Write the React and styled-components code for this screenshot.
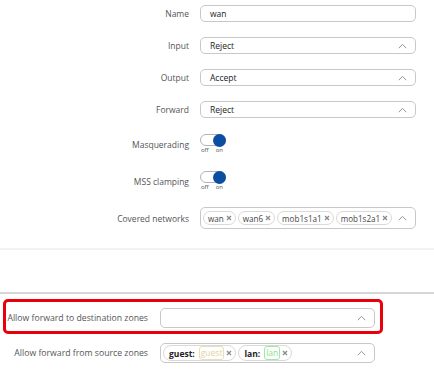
import React from "react";
import styled, { createGlobalStyle } from "styled-components";

const Global = createGlobalStyle`
  html, body { margin: 0; padding: 0; background: #fff; }
  body { font-family: "Open Sans", "DejaVu Sans", sans-serif; width: 434px; overflow: hidden; }
  * { box-sizing: border-box; }
`;

const TopSection = styled.div`
  padding: 5px 0 19px;
  border-bottom: 2px solid #f2f2f2;
  display: flex;
  flex-direction: column;
  gap: 15px;
`;

const FormRow = styled.div`
  display: grid;
  grid-template-columns: 189px 216px;
  column-gap: 11px;
  align-items: center;
`;

const Label = styled.div`
  text-align: right;
  font-size: ${(p) => p.$size || 8.5}px;
  color: #555;
  white-space: nowrap;
`;

const Field = styled.div`
  position: relative;
  height: ${(p) => p.$h || 17}px;
  border: 1px solid #c8c8c8;
  border-radius: 5px;
  background: #fff;
  display: flex;
  align-items: center;
  padding: 0 ${(p) => (p.$chips ? 22 : 9)}px 0 ${(p) => (p.$chips ? 2 : 9)}px;
  gap: 2px;
  font-size: 8.5px;
  color: #222;
`;

const Chevron = styled.svg`
  position: absolute;
  right: 8px;
  top: 50%;
  margin-top: -3px;
`;

const Arrow = () => (
  <Chevron width="9" height="6" viewBox="0 0 9 6">
    <path d="M0.8 5.2 L4.5 1.3 L8.2 5.2" fill="none" stroke="#999" strokeWidth="1" />
  </Chevron>
);

const ToggleGroup = styled.div`
  display: flex;
  flex-direction: column;
  width: 26px;
`;

const Track = styled.div`
  position: relative;
  width: 26px;
  height: 12px;
  margin-top: 1px;
  border: 1px solid #b4b4b4;
  border-radius: 7px;
  background: #fff;
`;

const Knob = styled.div`
  position: absolute;
  right: -1px;
  top: -1.5px;
  width: 13px;
  height: 13px;
  border-radius: 50%;
  background: #0b4ea2;
`;

const OffOn = styled.div`
  display: flex;
  justify-content: space-between;
  padding: 0 3px 0 1px;
  font-size: 6px;
  line-height: 9px;
  color: #555;
`;

const Toggle = () => (
  <ToggleGroup>
    <Track>
      <Knob />
    </Track>
    <OffOn>
      <span>off</span>
      <span>on</span>
    </OffOn>
  </ToggleGroup>
);

const Chip = styled.span`
  display: inline-flex;
  align-items: center;
  height: ${(p) => p.$h || 14}px;
  padding: 0 3px 0 ${(p) => p.$pl || 4}px;
  border: 1px solid #d9d9d9;
  border-radius: 8px;
  font-size: ${(p) => p.$fs || 8.1}px;
  color: #444;
  white-space: nowrap;
  gap: 2px;
`;

const XIcon = () => (
  <svg width="6" height="6" viewBox="0 0 6 6">
    <path d="M1 1 L5 5 M5 1 L1 5" stroke="#8a8a8a" strokeWidth="1.3" />
  </svg>
);

const Spacer = styled.div`
  height: 42px;
`;

const BottomSection = styled.div`
  border-top: 2px solid #d6d6d6;
  padding-top: 5px;
`;

const ZoneRow = styled.div`
  display: grid;
  grid-template-columns: 142px 215px;
  column-gap: 12px;
  align-items: center;
  width: 380px;
  margin-left: 3px;
  padding: 6px 5px 3px 0;
  border: 3px solid ${(p) => (p.$highlight ? "#e8000b" : "transparent")};
  border-radius: 5px;
`;

const ZoneName = styled.b`
  font-size: 8.5px;
  color: #222;
  font-weight: 700;
  margin-right: 2px;
`;

const ZoneTag = styled.span`
  font-size: 8.5px;
  line-height: 12px;
  padding: 0 1px;
  border: 1px solid ${(p) => p.$border};
  border-radius: 3px;
  color: ${(p) => p.$color};
`;

const networks = ["wan", "wan6", "mob1s1a1", "mob1s2a1"];
const zones = [
  { name: "guest:", tag: "guest", color: "#dcd3a2", border: "#e6dfb8" },
  { name: "lan:", tag: "lan", color: "#8fe08f", border: "#9fe89f" },
];

export default function App() {
  return (
    <>
      <Global />
      <TopSection>
        <FormRow>
          <Label>Name</Label>
          <Field>wan</Field>
        </FormRow>
        <FormRow>
          <Label>Input</Label>
          <Field>Reject<Arrow /></Field>
        </FormRow>
        <FormRow>
          <Label>Output</Label>
          <Field>Accept<Arrow /></Field>
        </FormRow>
        <FormRow>
          <Label>Forward</Label>
          <Field>Reject<Arrow /></Field>
        </FormRow>
        <FormRow>
          <Label>Masquerading</Label>
          <Toggle />
        </FormRow>
        <FormRow>
          <Label>MSS clamping</Label>
          <Toggle />
        </FormRow>
        <FormRow>
          <Label>Covered networks</Label>
          <Field $h={22} $chips>
            {networks.map((n) => (
              <Chip key={n}>
                {n}
                <XIcon />
              </Chip>
            ))}
            <Arrow />
          </Field>
        </FormRow>
      </TopSection>
      <Spacer />
      <BottomSection>
        <ZoneRow $highlight>
          <Label $size={8.7}>Allow forward to destination zones</Label>
          <Field $h={20}><Arrow /></Field>
        </ZoneRow>
        <ZoneRow>
          <Label $size={8.7}>Allow forward from source zones</Label>
          <Field $h={20} $chips>
            {zones.map((z) => (
              <Chip key={z.name} $h={16} $pl={5} $fs={8.5}>
                <ZoneName>{z.name}</ZoneName>
                <ZoneTag $color={z.color} $border={z.border}>{z.tag}</ZoneTag>
                <XIcon />
              </Chip>
            ))}
            <Arrow />
          </Field>
        </ZoneRow>
      </BottomSection>
    </>
  );
}
